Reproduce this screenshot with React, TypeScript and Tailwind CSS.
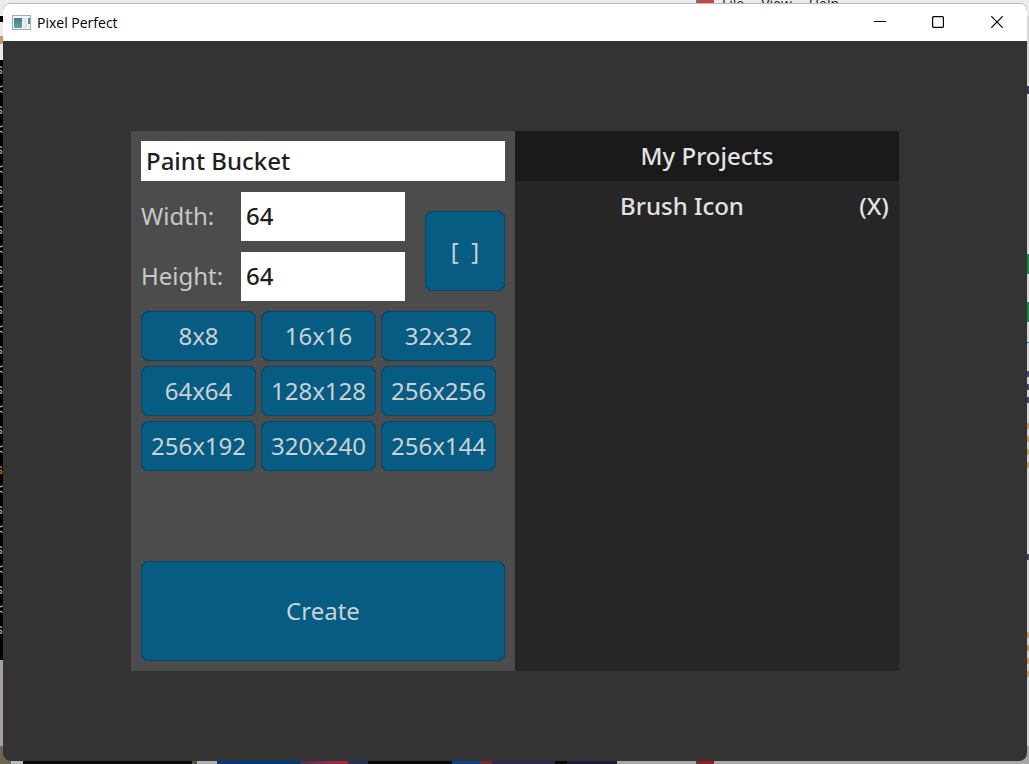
import React, { useState } from "react";

type Preset = {
  width: number;
  height: number;
};

const presets: Preset[] = [
  { width: 8, height: 8 },
  { width: 16, height: 16 },
  { width: 32, height: 32 },
  { width: 64, height: 64 },
  { width: 128, height: 128 },
  { width: 256, height: 256 },
  { width: 256, height: 192 },
  { width: 320, height: 240 },
  { width: 256, height: 144 },
];

// rows of the terminal that peek out on the left of the window
const terminalRows = Array.from({ length: 29 }, (_, i) => i);

const blueButton =
  "flex items-center justify-center border border-[#08476b] bg-[#065c82] rounded-[5px] [corner-shape:bevel] text-2xl text-[#ccd1d4] hover:bg-[#076b97]";

const textBox = "bg-white px-[5px] pb-0.5 font-medium text-[#1f1f1f] outline-none";

function Desktop() {
  return (
    <div aria-hidden="true" className="absolute inset-0 flex flex-col overflow-hidden bg-[#d6d6d6]">
      {/* TOP EDGE */}
      <div className="flex h-4 shrink-0 overflow-hidden bg-[#ebebeb] pl-[696px]">
        <div className="h-4 w-[18px] shrink-0 border-l-2 border-[#777777] bg-[#c4474a]" />
        <div className="-mt-1.5 flex gap-[17px] pl-2 font-['Open_Sans',sans-serif] text-sm leading-5 text-[#1a1a1a]">
          <span>File</span>
          <span>View</span>
          <span>Help</span>
        </div>
      </div>

      {/* SIDES */}
      <div className="flex min-h-0 flex-1 justify-between">
        <div className="flex w-6 flex-col overflow-hidden bg-[#a8a09c]">
          <div className="h-1.5 shrink-0 bg-black" />
          <div className="h-3.5 shrink-0 bg-[#ebebeb]" />
          <div className="h-2 shrink-0 bg-[#c09a72]" />
          <div className="h-4 shrink-0 bg-[#ebebeb]" />
          <div className="h-[600px] shrink-0 overflow-hidden bg-black">
            {terminalRows.map((i) => (
              <div
                key={i}
                className={
                  "-ml-[5px] h-5 font-['Liberation_Mono',monospace] text-sm leading-5 " +
                  (i === 20 ? "text-[#d98a1e]" : "text-[#bdbdbd]")
                }
              >
                {i % 2 === 0 ? "s" : "<"}
              </div>
            ))}
          </div>
        </div>
        <div className="flex w-0.5 flex-col bg-[#d6d6d6] pt-[70px]">
          <div className="h-2 bg-[#3b3566]" />
          <div className="mt-40 h-5 bg-[#138a35]" />
          <div className="mt-7 h-5 bg-[#138a35]" />
          <div className="mt-5 h-px bg-[#1673c4]" />
          <div className="mt-7 h-1.5 bg-[#4a4370]" />
          <div className="mt-[7px] h-1.5 bg-[#4a4370]" />
          <div className="mt-[7px] h-1.5 bg-[#4a4370]" />
          <div className="mt-5 h-1.5 bg-[#c9a560]" />
          <div className="mt-[7px] h-1.5 bg-[#c9a560]" />
          <div className="mt-[7px] h-1.5 bg-[#c9a560]" />
          <div className="mt-[7px] h-1.5 bg-[#c9a560]" />
          <div className="mt-[86px] h-1.5 bg-[#4a4370]" />
          <div className="mt-[72px] h-1.5 bg-[#c9a560]" />
          <div className="mt-[7px] h-1.5 bg-[#c9a560]" />
          <div className="mt-[7px] h-1.5 bg-[#c9a560]" />
          <div className="mt-[7px] h-1.5 bg-[#c9a560]" />
        </div>
      </div>

      {/* BOTTOM EDGE */}
      <div className="flex h-[18px] shrink-0 bg-[#a6a6a6]">
        <div className="w-[11px] shrink-0 bg-[#6e6350]" />
        <div className="w-3 shrink-0 bg-[#b9b9b9]" />
        <div className="w-[169px] shrink-0 bg-[#0e0b0c]" />
        <div className="w-[5px] shrink-0 bg-[#5c5242]" />
        <div className="w-5 shrink-0 bg-[#b0aeb0]" />
        <div className="w-[83px] shrink-0 bg-[#003a78]" />
        <div className="w-12 shrink-0 bg-linear-to-r from-[#4a2a5c] to-[#b8202e]" />
        <div className="w-5 shrink-0 bg-[#22305c]" />
        <div className="w-[84px] shrink-0 bg-[#09090b]" />
        <div className="w-7 shrink-0 bg-[#0b4388]" />
        <div className="w-3 shrink-0 bg-[#7c2432]" />
        <div className="w-[63px] shrink-0 bg-[#2f2950]" />
        <div className="w-3 shrink-0 bg-[#09090b]" />
        <div className="w-[50px] shrink-0 bg-[#1f1b38]" />
        <div className="w-[79px] shrink-0" />
        <div className="w-[18px] shrink-0 border-l-2 border-[#444444] bg-[#8c2020]" />
      </div>
    </div>
  );
}

function TitleBar() {
  return (
    <header className="flex h-[38px] shrink-0 items-center justify-between border-t border-[#b8b8b8] bg-white">
      <div className="flex items-center gap-1.5 pl-[9px]">
        <svg width="19" height="16" viewBox="0 0 19 16">
          <defs>
            <linearGradient id="appIcon" x1="0" y1="0" x2="0" y2="1">
              <stop offset="0" stopColor="#3c789c" />
              <stop offset="1" stopColor="#5fb083" />
            </linearGradient>
          </defs>
          <rect x="0.5" y="0.5" width="18" height="14" fill="#f3f5f7" stroke="#a3a9b5" />
          <rect x="2" y="3" width="8" height="10" fill="url(#appIcon)" />
          <rect x="11" y="3" width="4" height="10" fill="#e4e8ea" />
          <rect x="16" y="3" width="2" height="6" fill="#5295a0" />
        </svg>
        <h1 className="font-['Open_Sans',sans-serif] text-sm text-black">Pixel Perfect</h1>
      </div>

      <div className="flex h-full pb-0.5">
        <button aria-label="Minimize" className="flex w-[58px] items-center justify-center hover:bg-gray-100">
          <svg width="12" height="12" viewBox="0 0 12 12" stroke="black" fill="none">
            <path d="M0 5.5h12" />
          </svg>
        </button>
        <button aria-label="Maximize" className="flex w-[58px] items-center justify-center hover:bg-gray-100">
          <svg width="12" height="12" viewBox="0 0 12 12" stroke="black" fill="none" strokeWidth="1.2">
            <rect x="0.6" y="0.6" width="10.8" height="10.8" rx="1" />
          </svg>
        </button>
        <button aria-label="Close" className="flex w-[60px] items-center justify-center hover:bg-gray-100">
          <svg width="12" height="12" viewBox="0 0 12 12" stroke="black" fill="none" strokeWidth="1.2">
            <path d="M0.3 0.3l11.4 11.4M11.7 0.3L0.3 11.7" />
          </svg>
        </button>
      </div>
    </header>
  );
}

function App() {
  const [name, setName] = useState("Paint Bucket");
  const [width, setWidth] = useState("64");
  const [height, setHeight] = useState("64");
  const [projects, setProjects] = useState<string[]>(["Brush Icon"]);

  const applyPreset = (p: Preset) => {
    setWidth(String(p.width));
    setHeight(String(p.height));
  };

  const handleCreate = (e: React.FormEvent) => {
    e.preventDefault();
    setProjects([...projects, name]);
  };

  return (
    <div className="relative flex min-h-screen flex-col py-[3px] pr-0.5 pl-[3px]">
      <Desktop />

      <div className="relative flex flex-1 flex-col overflow-hidden rounded-lg bg-[#333333]">
        <TitleBar />

        <main className="flex flex-1 px-32 py-[90px] font-['Noto_Sans',sans-serif] text-2xl">
          <div className="grid flex-1 grid-cols-2">
            {/* NEW PROJECT */}
            <form onSubmit={handleCreate} className="flex flex-col bg-[#4c4c4c] p-2.5">
              <input
                aria-label="Project name"
                value={name}
                onChange={(e) => setName(e.target.value)}
                className={textBox + " h-10 w-full shrink-0"}
              />

              <div className="mt-2.5 flex justify-between">
                <div className="flex flex-col gap-2.5">
                  <div className="flex h-[50px] items-end">
                    <label htmlFor="width" className="w-[100px] pb-0.5 leading-[47px] text-[#c8c8c8]">
                      Width:
                    </label>
                    <input
                      id="width"
                      value={width}
                      onChange={(e) => setWidth(e.target.value)}
                      className={textBox + " h-[49px] w-[164px]"}
                    />
                  </div>
                  <div className="flex h-[50px] items-end">
                    <label htmlFor="height" className="w-[100px] pb-0.5 leading-[47px] text-[#c8c8c8]">
                      Height:
                    </label>
                    <input
                      id="height"
                      value={height}
                      onChange={(e) => setHeight(e.target.value)}
                      className={textBox + " h-[49px] w-[164px]"}
                    />
                  </div>
                </div>
                <div className="flex items-center pt-2.5">
                  <button type="button" className={blueButton + " size-20 whitespace-pre"}>
                    {"[  ]"}
                  </button>
                </div>
              </div>

              <div className="mt-2.5 flex flex-wrap gap-[5px]">
                {presets.map((p) => (
                  <button
                    key={p.width + "x" + p.height}
                    type="button"
                    onClick={() => applyPreset(p)}
                    className={blueButton + " h-[50px] w-[115px]"}
                  >
                    {p.width}x{p.height}
                  </button>
                ))}
              </div>

              <button type="submit" className={blueButton + " mt-auto h-[100px] shrink-0"}>
                Create
              </button>
            </form>

            {/* PROJECT LIST */}
            <section className="bg-[#262626] font-medium text-[#e3e3e3]">
              <h2 className="bg-[#1a1a1a] text-center leading-[50px]">My Projects</h2>
              <ul>
                {projects.map((project, i) => (
                  <li key={i} className="flex h-[50px]">
                    <button className="flex-1">{project}</button>
                    <button
                      aria-label={"Delete " + project}
                      onClick={() => setProjects(projects.filter((_, n) => n !== i))}
                      className="w-[50px]"
                    >
                      (X)
                    </button>
                  </li>
                ))}
              </ul>
            </section>
          </div>
        </main>
      </div>
    </div>
  );
}

export default App;
